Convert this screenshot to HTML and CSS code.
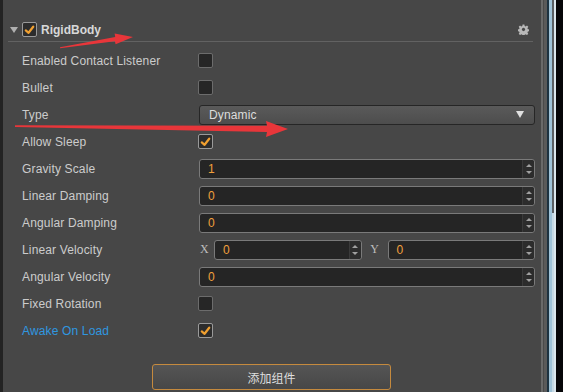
FILE: index.html
```html
<!DOCTYPE html>
<html>
<head>
<meta charset="utf-8">
<link rel="stylesheet" href="styles.css">
</head>
<body>
<div class="app">
  <div class="edge-left"></div>
  <div class="panel">
    <div class="header">
      <span class="fold"></span>
      <span class="check checked"><svg viewBox="0 0 14 14" width="14" height="14"><polyline points="3,7.5 6,10 11,3.5" fill="none" stroke="#f0a030" stroke-width="2.4" stroke-linecap="round" stroke-linejoin="round"/></svg></span>
      <span class="title">RigidBody</span>
      <svg class="gear" viewBox="0 0 12 12" width="11" height="11"><path fill="#b8b8b8" fill-rule="evenodd" d="M5 0.5h2l0.3 1.6 1.1 0.5 1.4-0.9 1.4 1.4-0.9 1.4 0.5 1.1 1.6 0.3v2l-1.6 0.3-0.5 1.1 0.9 1.4-1.4 1.4-1.4-0.9-1.1 0.5-0.3 1.6h-2l-0.3-1.6-1.1-0.5-1.4 0.9-1.4-1.4 0.9-1.4-0.5-1.1-1.600-0.3v-2l1.6-0.3 0.5-1.1-0.9-1.4 1.4-1.4 1.4 0.9 1.1-0.5z M6 4.2a1.8 1.8 0 1 0 0.001 0z"/></svg>
    </div>
    <div class="props">
      <div class="label">Enabled Contact Listener</div>
      <div class="ctrl"><span class="check"></span></div>

      <div class="label">Bullet</div>
      <div class="ctrl"><span class="check"></span></div>

      <div class="label">Type</div>
      <div class="ctrl"><div class="select"><span>Dynamic</span><span class="caret"></span></div></div>

      <div class="label">Allow Sleep</div>
      <div class="ctrl"><span class="check checked"><svg viewBox="0 0 14 14" width="14" height="14"><polyline points="3,7.5 6,10 11,3.5" fill="none" stroke="#f0a030" stroke-width="2.4" stroke-linecap="round" stroke-linejoin="round"/></svg></span></div>

      <div class="label">Gravity Scale</div>
      <div class="ctrl"><div class="num"><span class="val">1</span><span class="spin"><i class="up"></i><i class="down"></i></span></div></div>

      <div class="label">Linear Damping</div>
      <div class="ctrl"><div class="num"><span class="val">0</span><span class="spin"><i class="up"></i><i class="down"></i></span></div></div>

      <div class="label">Angular Damping</div>
      <div class="ctrl"><div class="num"><span class="val">0</span><span class="spin"><i class="up"></i><i class="down"></i></span></div></div>

      <div class="label">Linear Velocity</div>
      <div class="ctrl vec">
        <span class="axis ax">X</span>
        <div class="num"><span class="val">0</span><span class="spin"><i class="up"></i><i class="down"></i></span></div>
        <span class="axis ay">Y</span>
        <div class="num"><span class="val">0</span><span class="spin"><i class="up"></i><i class="down"></i></span></div>
      </div>

      <div class="label">Angular Velocity</div>
      <div class="ctrl"><div class="num"><span class="val">0</span><span class="spin"><i class="up"></i><i class="down"></i></span></div></div>

      <div class="label">Fixed Rotation</div>
      <div class="ctrl"><span class="check"></span></div>

      <div class="label link">Awake On Load</div>
      <div class="ctrl"><span class="check checked"><svg viewBox="0 0 14 14" width="14" height="14"><polyline points="3,7.5 6,10 11,3.5" fill="none" stroke="#f0a030" stroke-width="2.4" stroke-linecap="round" stroke-linejoin="round"/></svg></span></div>
    </div>
    <div class="actions">
      <button class="add">添加组件</button>
    </div>
  </div>
  <div class="scroll">
    <div class="s1"></div>
    <div class="s2"></div>
    <div class="s3"></div>
    <div class="s4"></div>
    <div class="s5"></div>
    <div class="s6"><div class="thumb"></div></div>
    <div class="s7"></div>
    <div class="s8"></div>
  </div>
  <svg class="annot" viewBox="0 0 563 392" width="563" height="392">
    <polygon fill="#e8363a" points="60,48.3 114.9,41.2 115.6,44.2 133,37 114.6,33.6 115.2,36.9 60,47.3"/>
    <polygon fill="#e8363a" points="15,125.2 267,125.8 266,121 288,129 266,137 267,132 15,127"/>
  </svg>
</div>
</body>
</html>
```

FILE: styles.css
```css
html, body {
  margin: 0;
  padding: 0;
}
body {
  width: 563px;
  height: 392px;
  overflow: hidden;
  background: #474747;
  font-family: "Liberation Sans", Arial, sans-serif;
  font-size: 12px;
  color: #d0d0d0;
}
.app {
  position: relative;
  display: flex;
  width: 563px;
  height: 392px;
}
.edge-left {
  width: 3px;
  background: #232323;
  flex: none;
}
.panel {
  width: 538px;
  flex: none;
  padding-top: 18px;
  box-sizing: border-box;
}
.header {
  margin: 0 8px 0 5px;
  height: 23px;
  border-bottom: 1px solid #626262;
  display: flex;
  align-items: center;
  padding-left: 2px;
  padding-right: 4px;
  box-sizing: content-box;
}
.fold {
  width: 0;
  height: 0;
  border-left: 4px solid transparent;
  border-right: 4px solid transparent;
  border-top: 6px solid #b0b0b0;
  margin-right: 4px;
  margin-top: 1px;
}
.check {
  width: 13px;
  height: 13px;
  border: 1px solid #6c6c6c;
  border-radius: 2px;
  background: #262626;
  display: inline-flex;
  align-items: center;
  justify-content: center;
  box-sizing: content-box;
}
.check.checked {
  border-color: #9a9a9a;
  background: #2c2c2c;
}
.check svg {
  display: block;
}
.title {
  margin-left: 4px;
  font-weight: bold;
  color: #d8d8d8;
  flex: 1;
}
.gear {
  display: block;
}
.props {
  padding: 5px 6px 0 19px;
  display: grid;
  grid-template-columns: 177px 1fr;
  grid-auto-rows: 27px;
}
.label {
  display: flex;
  align-items: center;
  color: #cccccc;
  letter-spacing: 0.15px;
}
.label.link {
  color: #2f97e0;
}
.ctrl {
  display: flex;
  align-items: center;
}
.ctrl .check {
  margin-left: -1px;
}
.select {
  flex: 1;
  height: 18px;
  border: 1px solid #262626;
  border-radius: 3px;
  background: linear-gradient(#5a5a5a, #4d4d4d);
  display: flex;
  align-items: center;
  justify-content: space-between;
  padding: 0 10px 0 9px;
  color: #dcdcdc;
  letter-spacing: 0.15px;
}
.caret {
  width: 0;
  height: 0;
  border-left: 4px solid transparent;
  border-right: 4px solid transparent;
  border-top: 7px solid #e0e0e0;
}
.num {
  flex: 1;
  height: 18px;
  border: 1px solid #7a7a7a;
  border-radius: 3px;
  background: #252525;
  display: flex;
  align-items: center;
  min-width: 0;
}
.val {
  flex: 1;
  padding-left: 8px;
  color: #f0a03c;
}
.spin {
  width: 11px;
  height: 18px;
  border-left: 1px solid #3a3a3a;
  background: #2c2c2c;
  display: flex;
  flex-direction: column;
  align-items: center;
  justify-content: center;
  gap: 4px;
  border-radius: 0 3px 3px 0;
}
.spin i {
  width: 0;
  height: 0;
  border-left: 3px solid transparent;
  border-right: 3px solid transparent;
}
.spin .up {
  border-bottom: 3px solid #a0a0a0;
}
.spin .down {
  border-top: 3px solid #a0a0a0;
}
.axis {
  font-family: "Liberation Serif", "DejaVu Serif", serif;
  font-size: 12px;
  color: #bdbdbd;
  flex: none;
}
.axis.ax {
  width: 15px;
  padding-left: 1px;
  box-sizing: border-box;
}
.axis.ay {
  width: 26px;
  text-align: center;
}
.actions {
  display: flex;
  justify-content: center;
  padding-top: 20px;
  padding-right: 1px;
}
.add {
  width: 239px;
  height: 26px;
  border: 1px solid #c58a3e;
  border-radius: 3px;
  background: linear-gradient(#555555, #474747);
  color: #dedede;
  font-family: "Noto Sans CJK SC", "Liberation Sans", sans-serif;
  font-size: 12px;
  padding: 0;
}
.scroll {
  display: flex;
  flex: none;
  width: 22px;
}
.scroll > div {
  height: 392px;
  flex: none;
}
.s1 { width: 2px; background: #6a6a6a; }
.s2 { width: 1px; background: #4a4a4a; }
.s3 { width: 3px; background: #5a5a5a; }
.s4 { width: 2px; background: #1d3240; }
.s5 { width: 3px; background: #9ec2d8; }
.s6 { width: 2px; background: #c4d8e4; }
.s7 { width: 2px; background: #dbe7ee; }
.s8 { width: 7px; background: #060608; }
.thumb {
  height: 213px;
  background: #5a5f63;
}
.annot {
  position: absolute;
  left: 0;
  top: 0;
  pointer-events: none;
}
```
